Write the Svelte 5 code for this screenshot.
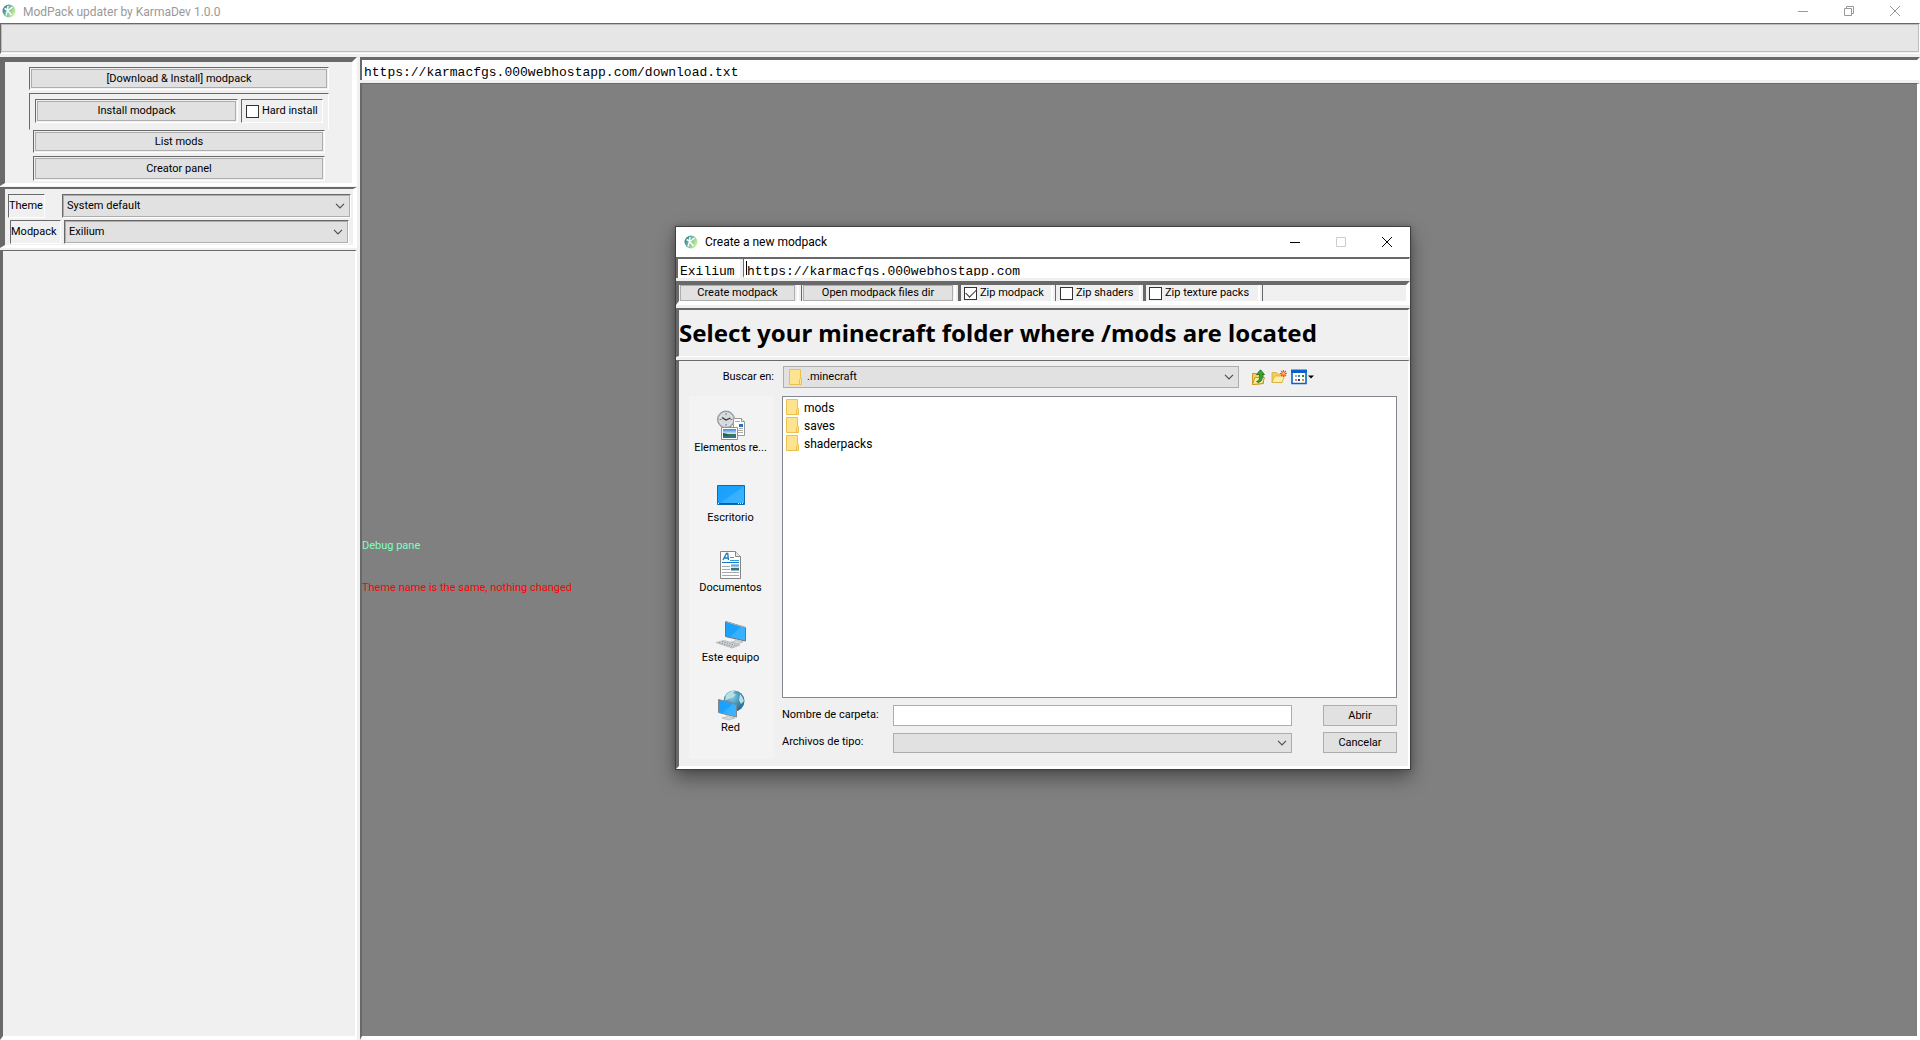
<script>
  const themes = ['System default'];
  const modpacks = ['Exilium'];
  const folders = ['mods', 'saves', 'shaderpacks'];
  const places = [
    { id: 'recent', label: 'Elementos re...' },
    { id: 'desktop', label: 'Escritorio' },
    { id: 'documents', label: 'Documentos' },
    { id: 'computer', label: 'Este equipo' },
    { id: 'network', label: 'Red' }
  ];
  let zipModpack = $state(true);
  let zipShaders = $state(false);
  let zipTextures = $state(false);
  let hardInstall = $state(false);
</script>

{#snippet logo()}
  <svg class="logo" viewBox="0 0 14 14" width="14" height="14" aria-hidden="true">
    <defs>
      <linearGradient id="globe" x1="0" y1="0" x2="1" y2="0.5">
        <stop offset="0" stop-color="#2f5688" />
        <stop offset="0.4" stop-color="#5fae9f" />
        <stop offset="1" stop-color="#c9f09c" />
      </linearGradient>
    </defs>
    <circle cx="7" cy="7" r="6.5" fill="url(#globe)" />
    <path d="M6 2 5.500 6 2.500 4.500M6 6.500 10.500 3M5.500 6.500 4 11.500M6 7 9.500 11" fill="none" stroke="#fff" stroke-width="1.400" />
  </svg>
{/snippet}

{#snippet chevron()}
  <svg class="chevron" viewBox="0 0 10 6" width="10" height="6" aria-hidden="true">
    <path d="M1 .8 5 4.800 9 .8" fill="none" stroke="#505050" stroke-width="1.200" />
  </svg>
{/snippet}

{#snippet folder()}
  <svg class="folder" viewBox="0 0 13 16" width="13" height="16" aria-hidden="true">
    <path d="M.5.500h11v9h1v6H.5z" fill="#ffe48f" stroke="#eac14d" />
    <path d="M10.500 15.500v-5l1-1" fill="none" stroke="#eac14d" />
  </svg>
{/snippet}

{#snippet placeIcon(id)}
  <svg viewBox="0 0 32 32" width="32" height="32" aria-hidden="true">
    <defs>
      <linearGradient id="screen" x1="0" y1="0" x2="1" y2="1">
        <stop offset="0" stop-color="#18a0fb" /><stop offset="0.5" stop-color="#1da3ff" />
        <stop offset="0.52" stop-color="#35afff" /><stop offset="1" stop-color="#3db5ff" />
      </linearGradient>
      <linearGradient id="photo" x1="0" y1="0" x2="0" y2="1">
        <stop offset="0" stop-color="#3f86d8" /><stop offset="0.5" stop-color="#c5e6f5" />
        <stop offset="0.6" stop-color="#3c7558" /><stop offset="1" stop-color="#2f6fa5" />
      </linearGradient>
      <radialGradient id="earth" cx="0.4" cy="0.3" r="0.8">
        <stop offset="0" stop-color="#8fd0e4" /><stop offset="0.5" stop-color="#3f92b8" />
        <stop offset="1" stop-color="#235f86" />
      </radialGradient>
    </defs>
    {#if id === 'recent'}
      <circle cx="11" cy="10.500" r="8.500" fill="#b9bec2" stroke="#8d9296" />
      <circle cx="11" cy="10.500" r="6.500" fill="#d5d9dc" stroke="#ececec" />
      <path d="M11 4v2M11 15v2M4.500 10.500h2M15.500 10.500h2" stroke="#777" />
      <path d="M7 8.500l4 2.500 4.500-2" fill="none" stroke="#333" stroke-width="1.200" />
      <path d="M18.500 9.500h8l3 3v14h-11z" fill="#fff" stroke="#9a9a9a" />
      <path d="M26.500 9.500v3h3" fill="#eee" stroke="#9a9a9a" />
      <path d="M20 12.500h5M20 21.500h8M20 23.500h8M24 19.500h4" stroke="#aaa" />
      <path d="M24 15h4v3h-4z" fill="#2d72b5" />
      <path d="M6.500 18.500h16v12h-16z" fill="#fff" stroke="#8f8f8f" />
      <path d="M8 20h13v9H8z" fill="url(#photo)" />
      <path d="M8 24q4 0 7 2.500l-7 .5z" fill="#2e5d3e" />
    {:else if id === 'desktop'}
      <path d="M2.500 6.500h27v19h-27z" fill="url(#screen)" stroke="#0f6ab0" />
      <path d="M3 24.500h26" stroke="#0c5c9d" />
      <path d="M3 24.500h1M23 24.500h1M25 24.500h1M27 24.500h1" stroke="#fff" />
    {:else if id === 'documents'}
      <path d="M5.500 2.500h15l5 5v22h-20z" fill="#fdfdfd" stroke="#868686" />
      <path d="M20.500 2.500v5h5" fill="#e6e6e6" stroke="#868686" />
      <path d="M8 11 11.500 4.500h1.200L13.500 11M9.500 9h4" fill="none" stroke="#1779ba" stroke-width="1.300" />
      <path d="M15 8.500h4M15 11.500h9" stroke="#2e9ae0" />
      <path d="M7 13.500h17" stroke="#1779ba" />
      <path d="M7 17.500h8M7 20.500h8M7 23.500h17M7 26.500h17" stroke="#a5a9ad" />
      <path d="M16 15.500h8v6h-8z" fill="url(#photo)" />
    {:else if id === 'computer'}
      <path d="M10.500 2.500 30.500 8.500V22L10.500 17.500z" fill="url(#screen)" stroke="#69747c" />
      <path d="M10.500 2.500 30.500 8.500" stroke="#a9b3ba" stroke-width="1.200" />
      <path d="M20 20.500v2l-4 .5 6 2 6-2-3-1z" fill="#d5dadd" stroke="#adb3b7" stroke-width=".7" />
      <path d="M1 23.500 9 21.500 25 26 17 29z" fill="#d5d8da" stroke="#a8adb0" stroke-width=".7" />
      <path d="M4 23.500 19 28M7 22.500 22 27" stroke="#8d9296" stroke-dasharray="1.500 1" />
    {:else}
      <circle cx="19" cy="12" r="10.500" fill="url(#earth)" />
      <path d="M11 6q4-4.500 9-4.500l-2 3 3 1-3 3-3 1-5 2zM25 5q3 3 4 7l-3 3-2-4z" fill="#b8dfe2" />
      <path d="M3.500 10.500 21.500 15.500V28L3.500 23.500z" fill="url(#screen)" stroke="#7c8890" />
      <path d="M12 26v2l-5 1 7 2 6-2-4-1z" fill="#d5dadd" stroke="#adb3b7" stroke-width=".7" />
    {/if}
  </svg>
{/snippet}

<div class="app">
  <header class="titlebar inactive">
    {@render logo()}
    <h1>ModPack updater by KarmaDev 1.0.0</h1>
    <div class="caption">
      <button aria-label="Minimize"><svg viewBox="0 0 10 10" width="10" height="10"><path d="M0 5.500h10" /></svg></button>
      <button aria-label="Restore"><svg viewBox="0 0 10 10" width="10" height="10"><path d="M.5 2.500h7v7h-7zM2.500 2V.5h7v7H8" /></svg></button>
      <button aria-label="Close"><svg viewBox="0 0 10 10" width="10" height="10"><path d="M0 0 10 10M10 0 0 10" /></svg></button>
    </div>
  </header>

  <div class="progress-wrap"><div class="progress" role="progressbar" aria-label="Download progress" aria-valuenow="0"></div></div>

  <main>
    <aside>
      <section class="actions">
        <div class="bevel wide"><button class="btn">[Download &amp; Install] modpack</button></div>
        <div class="install">
          <div class="bevel grow"><button class="btn">Install modpack</button></div>
          <label class="bevel check"><input type="checkbox" bind:checked={hardInstall} />Hard install</label>
        </div>
        <div class="bevel narrow"><button class="btn">List mods</button></div>
        <div class="bevel narrow last"><button class="btn">Creator panel</button></div>
      </section>
      <section class="settings">
        <div class="setting">
          <label class="bevel" for="theme">Theme</label>
          <div class="bevel combo theme">
            <select id="theme">{#each themes as t}<option>{t}</option>{/each}</select>
            {@render chevron()}
          </div>
        </div>
        <div class="setting second">
          <label class="bevel" for="modpack">Modpack</label>
          <div class="bevel combo">
            <select id="modpack">{#each modpacks as m}<option>{m}</option>{/each}</select>
            {@render chevron()}
          </div>
        </div>
      </section>
      <section class="blank"></section>
    </aside>

    <div class="content">
      <input class="mono address" aria-label="Download URL" value="https://karmacfgs.000webhostapp.com/download.txt" />
      <div class="debug">
        <p class="ok">Debug pane</p>
        <p class="error">Theme name is the same, nothing changed</p>
      </div>
    </div>
  </main>

  <div class="dialog" role="dialog" aria-labelledby="dialog-title">
    <header class="titlebar">
      {@render logo()}
      <h2 id="dialog-title">Create a new modpack</h2>
      <div class="caption">
        <button aria-label="Minimize"><svg viewBox="0 0 10 10" width="10" height="10"><path d="M0 5.500h10" /></svg></button>
        <button aria-label="Maximize" disabled><svg viewBox="0 0 10 10" width="10" height="10"><path d="M.5.500h9v9h-9z" /></svg></button>
        <button aria-label="Close"><svg viewBox="0 0 10 10" width="10" height="10"><path d="M0 0 10 10M10 0 0 10" /></svg></button>
      </div>
    </header>

    <div class="fields">
      <div class="field name"><input class="mono" aria-label="Modpack name" value="Exilium" /></div>
      <div class="field url"><span class="caret"></span><input class="mono" aria-label="Modpack URL" value="https://karmacfgs.000webhostapp.com" /></div>
    </div>

    <div class="tools">
      <div class="cell create"><button class="btn">Create modpack</button></div>
      <div class="cell open"><button class="btn">Open modpack files dir</button></div>
      <label class="cell check thick zip"><input type="checkbox" bind:checked={zipModpack} />Zip modpack</label>
      <label class="cell check shaders"><input type="checkbox" bind:checked={zipShaders} />Zip shaders</label>
      <label class="cell check thick textures"><input type="checkbox" bind:checked={zipTextures} />Zip texture packs</label>
      <div class="cell rest"></div>
    </div>

    <div class="heading"><h3>Select your minecraft folder where /mods are located</h3></div>

    <div class="chooser">
      <div class="lookup">
        <label for="lookin">Buscar en:</label>
        <div class="combo lookin">
          <select id="lookin"><option>.minecraft</option></select>
          {@render folder()}
          {@render chevron()}
        </div>
        <div class="icons">
          <button aria-label="Up one level">
            <svg viewBox="0 0 16 16" width="16" height="16">
              <path d="M1.500 4.500h4l1 1h6v9l-11 1z" fill="#f3cf62" stroke="#c99a25" />
              <path d="M1.500 15.500 4 8.500h9.500l-2 6z" fill="#ffeca4" stroke="#c99a25" />
              <path d="M5.500 12.500q4-1 3-7H5.500L9.500.8 13.500 5.500h-2.300q1 7-4 8z" fill="#35a535" stroke="#167016" stroke-width=".8" />
            </svg>
          </button>
          <button aria-label="New folder">
            <svg viewBox="0 0 16 16" width="16" height="16">
              <path d="M1 13.500v-10h4.500l1 1.500H11v8.500z" fill="#f3cf62" stroke="#d5a938" stroke-width=".8" />
              <path d="M1 13.500 3.500 7h10L11 13.500z" fill="#ffeca4" stroke="#d5a938" stroke-width=".8" />
              <path d="M12.500 1v7M9 4.500h7M10 2l5 5M15 2l-5 5" stroke="#f0512d" stroke-width="1.200" />
              <circle cx="12.500" cy="4.500" r="1.300" fill="#ffd36a" />
            </svg>
          </button>
          <button aria-label="View menu">
            <svg viewBox="0 0 24 16" width="24" height="16">
              <path d="M1 1.500h14v13H1z" fill="#fff" stroke="#0b62c9" stroke-width="1.600" />
              <path d="M0 .7h16v3.300H0z" fill="#0b62c9" />
              <path d="M4 6h2v2H4z" fill="#a1a4c8" /><path d="M7 6h2v2H7z" fill="#2f85d8" /><path d="M11 6h2v2h-2z" fill="#199419" />
              <path d="M4 10h2v2H4z" fill="#f07654" /><path d="M7 10h2v2H7z" fill="#173c9b" /><path d="M11 10h2v2h-2z" fill="#c89b10" />
              <path d="M17 6.500h6l-3 3z" fill="#000" />
            </svg>
          </button>
        </div>
      </div>

      <div class="browse">
        <nav>
          {#each places as p}
            <button class="place">{@render placeIcon(p.id)}<span>{p.label}</span></button>
          {/each}
        </nav>
        <div class="right">
          <ul>
            {#each folders as f}<li>{@render folder()}<span>{f}</span></li>{/each}
          </ul>
          <div class="form">
            <label for="folder-name">Nombre de carpeta:</label>
            <input id="folder-name" />
            <button class="btn">Abrir</button>
            <label for="file-type">Archivos de tipo:</label>
            <div class="combo filetype"><select id="file-type"></select>{@render chevron()}</div>
            <button class="btn">Cancelar</button>
          </div>
        </div>
      </div>
    </div>
  </div>
</div>

<style>
  :global(body) { margin: 0; }
  .app, .app * { box-sizing: border-box; }
  .app {
    position: relative;
    display: flex;
    flex-direction: column;
    min-height: 100vh;
    background: #f0f0f0;
    color: #000;
    font: 11px/14px Roboto, 'DejaVu Sans', sans-serif;
    overflow: hidden;
  }
  button, input, select { font: inherit; color: inherit; margin: 0; border-radius: 0; outline: 0; }
  h1, h2, h3, p, ul { margin: 0; padding: 0; font-weight: 400; }

  .titlebar {
    display: flex;
    align-items: center;
    background: #fff;
  }
  .titlebar h1, .titlebar h2 { font-size: 12px; line-height: 16px; margin-left: 7px; flex: 1; }
  .inactive { height: 23px; padding-left: 2px; color: #999; }
  .inactive .logo { margin-bottom: 2px; }
  .caption { display: flex; }
  .caption button {
    display: grid;
    place-items: center;
    width: 46px;
    height: 20px;
    padding: 0;
    border: 0;
    background: none;
  }
  .inactive .caption { padding: 0 2px 2px 0; }
  .caption svg { overflow: visible; }
  .caption path { fill: none; stroke: currentColor; }
  .caption button:disabled { color: #ccc; }

  .progress-wrap { height: 31px; border: 1px solid; border-color: #696969 #fff #fff #696969; }
  .progress { height: 28px; border: 1px solid #bcbcbc; background: #e6e6e6; }

  main { display: flex; flex: 1; padding-top: 3px; }
  aside { display: flex; flex-direction: column; width: 360px; padding-right: 3px; background: #f0f0f0; }
  .bevel { border: 1px solid; border-color: #696969 #fff #fff #696969; }
  .btn {
    display: block;
    width: 100%;
    height: 100%;
    padding: 0;
    border: 1px solid #adadad;
    background: #e1e1e1;
    text-align: center;
  }
  .actions {
    display: flex;
    flex-direction: column;
    height: 129px;
    padding: 5px 24px 0;
    border: solid;
    border-width: 5px 5px 3px 5px;
    border-color: #696969 #fff #fff #696969;
  }
  .actions .bevel { padding: 1px; }
  .wide { height: 23px; width: 300px; }
  .install {
    display: flex;
    gap: 3px;
    width: 300px;
    height: 37px;
    margin-top: 3px;
    padding: 5px 5px 6px;
    border: 1px solid;
    border-color: #696969 #fff transparent #696969;
  }
  .grow { flex: 1; }
  .check { display: flex; align-items: center; gap: 3px; white-space: nowrap; }
  .install .check { width: 82px; padding-left: 4px; }
  .narrow { width: 292px; height: 23px; margin-left: 4px; }
  .last { margin-top: 3px; height: 25px; }

  input[type='checkbox'] {
    appearance: none;
    flex: none;
    display: grid;
    place-items: center;
    width: 13px;
    height: 13px;
    border: 1px solid #333;
    background: #fff;
  }
  input[type='checkbox']:checked::after {
    content: '';
    width: 9px;
    height: 5px;
    margin-bottom: 3px;
    border: solid #333;
    border-width: 0 0 1px 1px;
    rotate: -45deg;
  }

  .settings {
    height: 61px;
    margin-top: 1px;
    padding: 5px 2px 0 3px;
    border: solid;
    border-width: 2px 4px 3px 5px;
    border-color: #696969 #fff #fff #696969;
  }
  .setting { display: flex; justify-content: space-between; height: 24px; }
  .setting label { width: 37px; line-height: 22px; }
  .second { margin-top: 2px; padding: 0 2px; }
  .second label { width: 51px; }
  .combo { display: grid; grid-template-columns: 1fr 20px; align-items: center; }
  .combo select {
    grid-area: 1 / 1 / 2 / 3;
    width: 100%;
    height: 100%;
    appearance: none;
    padding: 0 20px 0 3px;
    border: 1px solid #adadad;
    background: #e1e1e1;
  }
  .combo .chevron { grid-area: 1 / 2; justify-self: center; pointer-events: none; }
  .second .combo { width: 285px; }
  .theme { width: 289px; }
  .blank {
    flex: 1;
    margin-top: 2px;
    border: solid;
    border-width: 1px 2px 4px 3px;
    border-color: #696969 #fff #fff #696969;
  }

  .content { display: flex; flex: 1; flex-direction: column; min-width: 0; }
  .mono { font: 13px/16px 'Liberation Mono', monospace; border: 0; background: #fff; min-width: 0; }
  .address {
    height: 23px;
    padding: 4px 2px 0;
    border: solid;
    border-width: 3px 3px 0 2px;
    border-color: #696969 #fff #fff #696969;
  }
  .debug {
    display: flex;
    flex: 1;
    flex-direction: column;
    justify-content: center;
    gap: 28px;
    margin-top: 3px;
    padding-top: 13px;
    background: #808080;
    border: solid;
    border-width: 1px 3px 4px 2px;
    border-color: #696969 #fff #fff #696969;
  }
  .ok { color: #7fffc0; }
  .error { color: #f00; }

  /* Floating window over the debug pane */
  .dialog {
    position: absolute;
    left: 675px;
    top: 226px;
    width: 736px;
    border: 1px solid #404040;
    background: #f0f0f0;
    box-shadow: 0 8px 18px rgba(0, 0, 0, 0.4), 0 0 6px rgba(0, 0, 0, 0.2);
  }
  .dialog .titlebar { height: 30px; padding-left: 8px; }
  .fields {
    display: flex;
    height: 21px;
    border: solid;
    border-width: 2px 1px 0 2px;
    border-color: #696969 #fff #fff #696969;
  }
  .field { display: flex; overflow: hidden; height: 19px; border-bottom: 2px solid #fff; background: #fff; }
  .field .mono { flex: 1; height: 16px; margin-top: 5px; padding: 0; }
  .name { width: 62px; padding-left: 2px; }
  .url { flex: 1; margin-left: 3px; border-left: 1px solid #696969; }
  .caret { width: 1px; height: 14px; margin: 2px 0 0 2px; background: #000; }
  .tools {
    display: flex;
    height: 24px;
    margin-top: 3px;
    border: solid;
    border-width: 4px 4px 4px 3px;
    border-color: #696969 #fff #fff #696969;
  }
  .cell { border: solid; border-width: 0 2px 0 1px; border-color: #696969 #fff #fff #696969; }
  .cell.thick { border-left-width: 3px; }
  .create { width: 120px; padding: 0 2px 0 1px; border-left: 0; }
  .open { margin-left: 2px; width: 155px; padding: 0 1px; }
  .zip { margin-left: 2px; width: 95px; padding-left: 3px; }
  .shaders { margin-left: 2px; width: 86px; padding-left: 4px; }
  .textures { margin-left: 2px; width: 117px; padding-left: 3px; }
  .rest { margin-left: 2px; flex: 1; border-right: 0; }
  .heading {
    height: 49px;
    margin-top: 3px;
    padding: 8px 0;
    border: solid;
    border-width: 2px 2px 1px 3px;
    border-color: #696969 #fff #fff #696969;
  }
  h3 { font: bold 24px/30px 'Noto Sans', sans-serif; white-space: nowrap; }
  .chooser {
    margin-top: 3px;
    padding: 5px 11px 7px 10px;
    border: solid;
    border-width: 1px 2px 3px 3px;
    border-color: #696969 #fff #fff #696969;
  }
  .lookup { display: flex; align-items: center; height: 22px; }
  .lookup label { width: 85px; text-align: right; }
  .lookin { height: 22px; width: 456px; margin-left: 9px; }
  .lookin select { padding-left: 23px; }
  .lookin .folder { grid-area: 1 / 1; margin-left: 6px; pointer-events: none; }
  .icons { display: flex; gap: 4px; margin-left: 12px; }
  .icons button { display: block; padding: 0; border: 0; background: none; }
  .icons svg { display: block; }
  .browse { display: flex; gap: 8px; margin-top: 8px; }
  nav { width: 85px; padding: 13px 2px 0 0; background: #f3f3f3; }
  .place {
    display: flex;
    flex-direction: column;
    align-items: center;
    width: 100%;
    height: 70px;
    padding: 0;
    border: 0;
    background: none;
    white-space: nowrap;
  }
  .right { flex: 1; }
  ul {
    height: 302px;
    padding: 1px 3px;
    border: 1px solid #828790;
    background: #fff;
    list-style: none;
    font-size: 12px;
    line-height: 18px;
  }
  li { display: flex; align-items: center; gap: 5px; height: 18px; }
  li span { padding-top: 1px; }
  .form {
    display: grid;
    grid-template-columns: 111px 399px 74px;
    grid-auto-rows: 21px;
    justify-content: start;
    row-gap: 6px;
    padding: 7px 0 0;
  }
  .form > input { height: 21px; border: 1px solid #adadad; background: #fff; }
  .form label { line-height: 20px; }
  .form > .btn { margin-left: 31px; width: 74px; }
  .filetype { padding-top: 1px; }
</style>
